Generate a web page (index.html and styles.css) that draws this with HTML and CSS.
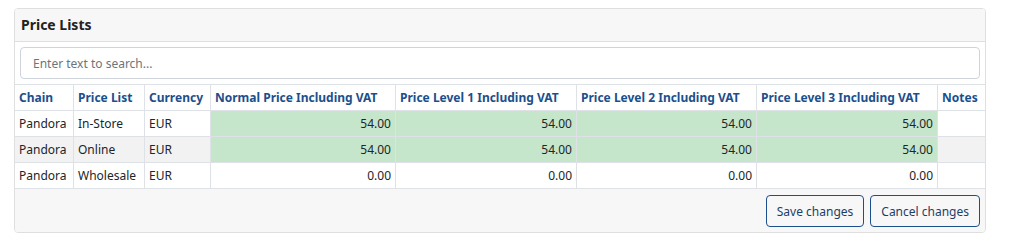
FILE: index.html
```html
<!DOCTYPE html>
<html lang="en">
<head>
  <meta charset="UTF-8" />
  <title>Price Lists</title>
  <link rel="stylesheet" href="styles.css">
</head>
<body>
  <div class="card">
    <div class="card-header">Price Lists</div>
    <div class="search">
      <input type="text" placeholder="Enter text to search..." />
    </div>
    <table class="grid">
      <thead>
        <tr>
          <th class="c-chain">Chain</th>
          <th class="c-list">Price List</th>
          <th class="c-cur">Currency</th>
          <th class="c-normal">Normal Price Including VAT</th>
          <th class="c-lvl1">Price Level 1 Including VAT</th>
          <th class="c-lvl2">Price Level 2 Including VAT</th>
          <th class="c-lvl3">Price Level 3 Including VAT</th>
          <th>Notes</th>
        </tr>
      </thead>
      <tbody>
        <tr>
          <td>Pandora</td><td>In-Store</td><td>EUR</td>
          <td class="num set">54.00</td><td class="num set">54.00</td>
          <td class="num set">54.00</td><td class="num set">54.00</td><td></td>
        </tr>
        <tr class="alt">
          <td>Pandora</td><td>Online</td><td>EUR</td>
          <td class="num set">54.00</td><td class="num set">54.00</td>
          <td class="num set">54.00</td><td class="num set">54.00</td><td></td>
        </tr>
        <tr>
          <td>Pandora</td><td>Wholesale</td><td>EUR</td>
          <td class="num">0.00</td><td class="num">0.00</td>
          <td class="num">0.00</td><td class="num">0.00</td><td></td>
        </tr>
      </tbody>
    </table>
    <div class="card-footer">
      <button type="button">Save changes</button>
      <button type="button">Cancel changes</button>
    </div>
  </div>
</body>
</html>
```

FILE: styles.css
```css
body {
  margin: 8px;
  font-family: 'Noto Sans', 'Open Sans', sans-serif;
  font-size: 12px;
  color: #212529;
  background: #fff;
}
.card {
  width: 970px;
  margin-left: 6px;
  border: 1px solid #dfdfdf;
  border-radius: 4px;
  overflow: hidden;
}
.card-header {
  background: #f7f7f7;
  border-bottom: 1px solid #dfdfdf;
  height: 32px;
  line-height: 32px;
  padding: 0 6px;
  font-weight: bold;
  font-size: 14px;
  color: #222;
}
.search {
  padding: 5px;
}
.search input {
  display: block;
  box-sizing: border-box;
  width: 100%;
  height: 32px;
  padding: 0 12px;
  border: 1px solid #ced4da;
  border-radius: 4px;
  font-family: inherit;
  font-size: 12px;
}
.search input::placeholder {
  color: #6c757d;
}
.grid {
  width: 100%;
  border-collapse: collapse;
  table-layout: fixed;
}
.grid th, .grid td {
  height: 25px;
  padding: 0 4px;
  border: 1px solid #dee2e6;
  text-align: left;
  white-space: nowrap;
}
.grid tr > :first-child { border-left: none; }
.grid tr > :last-child { border-right: none; }
.grid th {
  color: #1c4f8c;
  font-weight: bold;
}
.c-chain { width: 50px; }
.c-list { width: 62px; }
.c-cur { width: 57px; }
.c-normal { width: 176px; }
.c-lvl1 { width: 172px; }
.c-lvl2 { width: 171px; }
.c-lvl3 { width: 172px; }
.grid .num { text-align: right; }
.grid .alt td { background: #f2f2f2; }
.grid td.set, .grid .alt td.set { background: #c6e6cc; }
.card-footer {
  background: #f7f7f7;
  padding: 6px 5px 5px;
  display: flex;
  justify-content: flex-end;
  gap: 6px;
}
.card-footer button {
  height: 32px;
  min-width: 98px;
  padding: 0 10px;
  background: #f7f7f7;
  border: 1px solid #1c4f8c;
  border-radius: 4px;
  font-family: inherit;
  font-size: 12px;
  color: #1e3e66;
  cursor: pointer;
}
```
